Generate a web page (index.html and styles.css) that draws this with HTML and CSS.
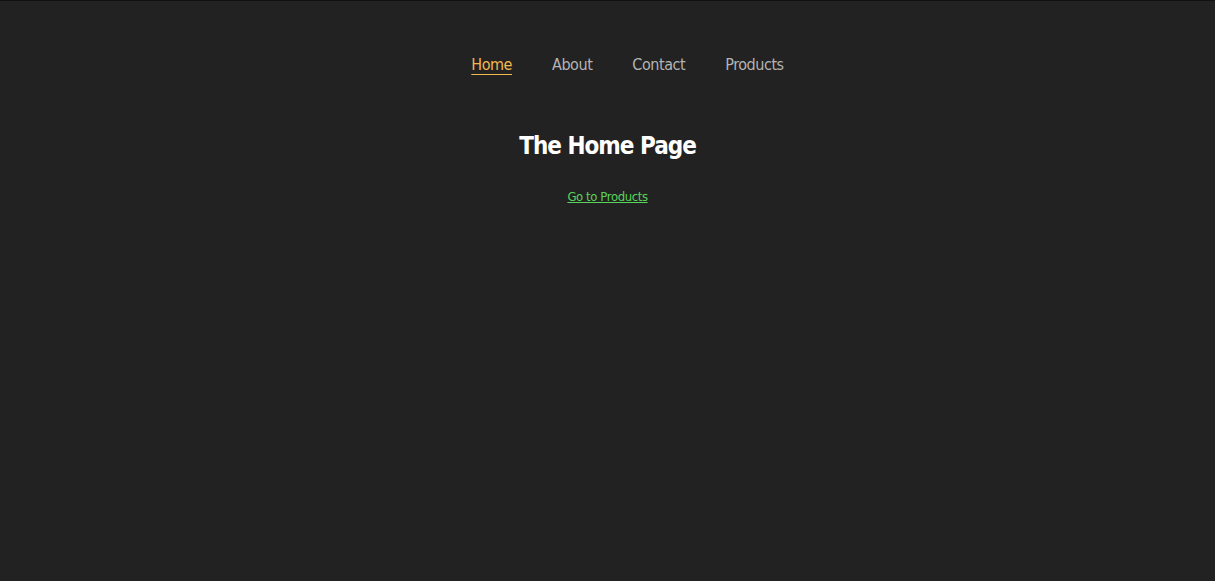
FILE: index.html
```html
<!DOCTYPE html>
<html lang="en">
<head>
<meta charset="utf-8">
<title>Home</title>
<link rel="stylesheet" href="styles.css">
</head>
<body>
<div class="app">
  <nav class="nav">
    <ul class="nav-list">
      <li><a class="nav-link active" href="#">Home</a></li>
      <li><a class="nav-link" href="#">About</a></li>
      <li><a class="nav-link" href="#">Contact</a></li>
      <li><a class="nav-link" href="#">Products</a></li>
    </ul>
  </nav>
  <main class="page">
    <h1 class="title">The Home Page</h1>
    <a class="go-link" href="#">Go to Products</a>
  </main>
</div>
</body>
</html>
```
FILE: styles.css
```css
html, body {
  margin: 0;
  height: 100%;
}
body {
  background: #222222;
  border-top: 1px solid #111111;
  box-sizing: border-box;
  font-family: "DejaVu Sans", "Liberation Sans", sans-serif;
  font-stretch: condensed;
}
.app {
  display: flex;
  flex-direction: column;
  align-items: center;
}
.nav {
  padding-top: 52px;
}
.nav-list {
  display: flex;
  gap: 40px;
  list-style: none;
  margin: 0;
  padding: 0 0 0 40px;
}
.nav-link {
  color: #b4b4b4;
  text-decoration: none;
  font-size: 16px;
  letter-spacing: -0.45px;
  line-height: 24px;
}
.nav-link.active {
  color: #f2b94e;
  text-decoration: underline;
  text-underline-offset: 4px;
}
.page {
  display: flex;
  flex-direction: column;
  align-items: center;
  padding-top: 49px;
}
.title {
  margin: 0;
  color: #ffffff;
  font-size: 24px;
  font-weight: 700;
  letter-spacing: -1px;
  line-height: 40px;
}
.go-link {
  margin-top: 23px;
  color: #5ad35a;
  font-size: 13px;
  letter-spacing: -0.4px;
  text-decoration: underline;
}
```
